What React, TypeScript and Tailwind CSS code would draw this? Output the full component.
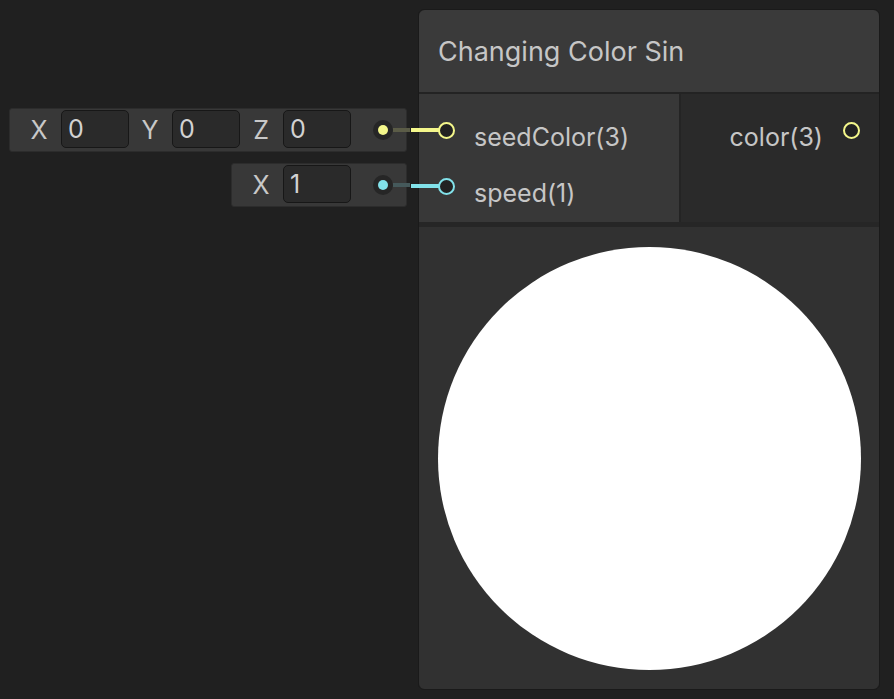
import React from 'react';

const YELLOW = '#f4f78b';
const CYAN = '#82e2ea';

interface FieldProps {
  label: string;
  value: string;
  first?: boolean;
}

const Field: React.FC<FieldProps> = ({ label, value, first }) => (
  <div className={`flex items-center ${first ? '' : 'ml-[12px]'}`}>
    <span className="w-[18px] text-center text-[25px] text-[#c8c8c8] leading-none">{label}</span>
    <div className="ml-[13px] mt-[-2px] w-[68px] h-[38px] rounded-[5px] bg-[#2a2a2a] border border-[#171717] flex items-center pl-[6px] text-[25px] text-[#d2d2d2] leading-none">
      {value}
    </div>
  </div>
);

const RowPort: React.FC<{ color: string; dim: string }> = ({ color, dim }) => (
  <div className="relative ml-auto mr-[13px] w-[20px] h-[20px] rounded-full bg-[#262626] flex items-center justify-center">
    <div className="w-[10px] h-[10px] rounded-full" style={{ backgroundColor: color }} />
    <div className="absolute left-[20px] top-[8px] w-[17px] h-[4px]" style={{ backgroundColor: dim }} />
  </div>
);

interface InputRowProps {
  fields: { label: string; value: string }[];
  color: string;
  dim: string;
  width: string;
}

const InputRow: React.FC<InputRowProps> = ({ fields, color, dim, width }) => (
  <div className={`${width} h-[44px] rounded-[3px] bg-[#383838] border border-[#2c2c2c] flex items-center pl-[20px]`}>
    {fields.map((f, i) => (
      <Field key={f.label} label={f.label} value={f.value} first={i === 0} />
    ))}
    <RowPort color={color} dim={dim} />
  </div>
);

const NodePort: React.FC<{ color: string; wire?: boolean }> = ({ color, wire }) => (
  <div className="relative w-[17px] h-[17px] rounded-full bg-[#222222] border-[2px] shrink-0" style={{ borderColor: color }}>
    {wire && (
      <div className="absolute right-[14px] top-[4.5px] w-[28px] h-[4px]" style={{ backgroundColor: color }} />
    )}
  </div>
);

export default function App() {
  return (
    <div
      className="w-[894px] h-[699px] bg-[#202020] flex items-start overflow-hidden"
      style={{ fontFamily: 'Inter, "Noto Sans", sans-serif' }}
    >
      {/* incoming values */}
      <div className="w-[418px] shrink-0 pt-[108px] pr-[11px] flex flex-col items-end gap-[11px]">
        <InputRow
          width="w-[398px]"
          color={YELLOW}
          dim="#5b5c47"
          fields={[
            { label: 'X', value: '0' },
            { label: 'Y', value: '0' },
            { label: 'Z', value: '0' },
          ]}
        />
        <InputRow width="w-[176px]" color={CYAN} dim="#45595b" fields={[{ label: 'X', value: '1' }]} />
      </div>

      {/* node */}
      <div className="mt-[9px] w-[462px] h-[681px] rounded-[6px] bg-[#262626] border border-[#1a1a1a] flex flex-col overflow-visible">
        <div className="h-[82px] shrink-0 rounded-t-[6px] bg-[#3a3a3a] flex items-center pl-[19px] text-[27px] text-[#c6c6c6] leading-none">
          Changing Color Sin
        </div>
        <div className="h-[2px] bg-[#232323]" />
        <div className="h-[128px] shrink-0 flex">
          <div className="w-[260px] bg-[#383838] flex flex-col pt-[24px] gap-[32px]">
            <div className="h-[24px] flex items-center">
              <div className="ml-[19px]">
                <NodePort color={YELLOW} wire />
              </div>
              <span className="ml-[19px] mt-[15px] text-[25px] text-[#c6c6c6] leading-none">seedColor(3)</span>
            </div>
            <div className="h-[24px] flex items-center">
              <div className="ml-[19px]">
                <NodePort color={CYAN} wire />
              </div>
              <span className="ml-[19px] mt-[15px] text-[25px] text-[#c6c6c6] leading-none">speed(1)</span>
            </div>
          </div>
          <div className="w-[2px] bg-[#242424]" />
          <div className="flex-1 bg-[#2a2a2a] pt-[24px] pr-[19px]">
            <div className="h-[24px] flex items-center justify-end">
              <span className="mt-[15px] text-[25px] text-[#c6c6c6] leading-none mr-[20px]">color(3)</span>
              <NodePort color={YELLOW} />
            </div>
          </div>
        </div>
        <div className="h-[5px] bg-[#262626]" />
        <div className="flex-1 rounded-b-[6px] bg-[#313131] flex items-center justify-center">
          <div className="w-[423px] h-[423px] rounded-full bg-white" />
        </div>
      </div>
    </div>
  );
}
